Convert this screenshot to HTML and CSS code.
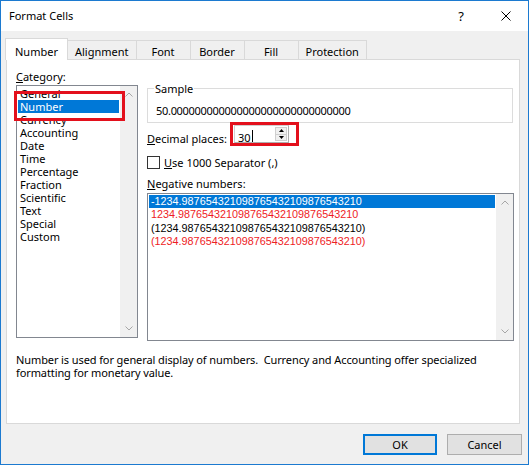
FILE: index.html
```html
<!DOCTYPE html>
<html>
<head>
<meta charset="utf-8">
<link rel="stylesheet" href="styles.css">
</head>
<body>
<div class="window">
  <div class="titlebar">
    <span class="title">Format Cells</span>
    <span class="tbtn help">?</span>
    <span class="tbtn close">
      <svg width="10" height="10" viewBox="0 0 10 10"><path d="M0.5 0.5 L9.5 9.5 M9.5 0.5 L0.5 9.5" stroke="#000" stroke-width="1" fill="none"/></svg>
    </span>
  </div>
  <div class="tabs">
    <div class="tab active">Number</div>
    <div class="tab">Alignment</div>
    <div class="tab">Font</div>
    <div class="tab">Border</div>
    <div class="tab">Fill</div>
    <div class="tab">Protection</div>
  </div>
  <div class="panel">
    <div class="main">
      <div class="left">
        <div class="label"><u>C</u>ategory:</div>
        <div class="listbox cat">
          <ul class="items">
            <li>General</li>
            <li class="sel">Number</li>
            <li>Currency</li>
            <li>Accounting</li>
            <li>Date</li>
            <li>Time</li>
            <li>Percentage</li>
            <li>Fraction</li>
            <li>Scientific</li>
            <li>Text</li>
            <li>Special</li>
            <li>Custom</li>
          </ul>
          <div class="scrollbar">
            <span class="sbtn"><svg width="8" height="5" viewBox="0 0 8 5"><path d="M0.5 4.5 L4 1 L7.5 4.5" stroke="#a6a6a6" fill="none"/></svg></span>
            <span class="sbtn"><svg width="8" height="5" viewBox="0 0 8 5"><path d="M0.5 0.5 L4 4 L7.5 0.5" stroke="#a6a6a6" fill="none"/></svg></span>
          </div>
        </div>
        <div class="annot annot-cat"></div>
      </div>
      <div class="right">
        <fieldset class="sample">
          <legend>Sample</legend>
          <div class="sample-value">50.000000000000000000000000000000</div>
        </fieldset>
        <div class="decimal-row">
          <span class="dec-label"><u>D</u>ecimal places:</span>
          <span class="spin-annot">
            <span class="spin">
              <span class="spin-val">30</span><span class="caret"></span>
              <span class="spin-btns">
                <span class="sp-up"><svg width="5" height="3" viewBox="0 0 5 3"><path d="M0 3 L2.5 0 L5 3 Z" fill="#000"/></svg></span>
                <span class="sp-down"><svg width="5" height="3" viewBox="0 0 5 3"><path d="M0 0 L2.5 3 L5 0 Z" fill="#000"/></svg></span>
              </span>
            </span>
          </span>
        </div>
        <div class="check-row">
          <span class="checkbox"></span>
          <span><u>U</u>se 1000 Separator (,)</span>
        </div>
        <div class="label neg-label"><u>N</u>egative numbers:</div>
        <div class="listbox neg">
          <ul class="items neg-items">
            <li class="sel">-1234.987654321098765432109876543210</li>
            <li class="red">1234.987654321098765432109876543210</li>
            <li>(1234.987654321098765432109876543210)</li>
            <li class="red">(1234.987654321098765432109876543210)</li>
          </ul>
          <div class="scrollbar">
            <span class="sbtn"><svg width="8" height="5" viewBox="0 0 8 5"><path d="M0.5 4.5 L4 1 L7.5 4.5" stroke="#a6a6a6" fill="none"/></svg></span>
            <span class="sbtn"><svg width="8" height="5" viewBox="0 0 8 5"><path d="M0.5 0.5 L4 4 L7.5 0.5" stroke="#a6a6a6" fill="none"/></svg></span>
          </div>
        </div>
      </div>
    </div>
    <p class="desc">Number is used for general display of numbers.&nbsp; Currency and Accounting offer specialized<br>formatting for monetary value.</p>
  </div>
  <div class="footer">
    <button class="btn default">OK</button>
    <button class="btn cancel">Cancel</button>
  </div>
</div>
</body>
</html>
```

FILE: styles.css
```css
* { box-sizing: border-box; }
body { margin: 0; }
.window {
  width: 529px;
  height: 465px;
  border: 1px solid #1c7ad0;
  background: #f0f0f0;
  font-family: "Noto Sans", sans-serif;
  font-size: 11px;
  line-height: 13px;
  color: #000;
  overflow: hidden;
}
.titlebar {
  height: 30px;
  background: #fff;
  display: flex;
  align-items: flex-start;
}
.title { flex: 1; padding: 8px 0 0 8px; font-size: 11px; }
.tbtn {
  height: 30px;
  display: flex;
  align-items: center;
  justify-content: center;
}
.help { width: 46px; font-size: 13px; }
.close { width: 44px; }

.tabs {
  display: flex;
  align-items: flex-end;
  height: 21px;
  margin: 7px 0 0 4px;
  position: relative;
  z-index: 1;
}
.tab {
  height: 19px;
  padding: 4px 7px 0;
  min-width: 55px;
  text-align: center;
  border: 1px solid #d9d9d9;
  border-bottom: 0;
  background: #f0f0f0;
  margin-left: -1px;
  white-space: nowrap;
}
.tab.active {
  height: 22px;
  padding: 6px 9px 0;
  margin-left: 0;
  margin-bottom: -1px;
  background: #fff;
  position: relative;
  z-index: 2;
}

.panel {
  height: 365px;
  margin: 0 8px 0 5px;
  border: 1px solid #d9d9d9;
  background: #fff;
  padding: 10px 0 0 9px;
  display: flex;
  flex-direction: column;
}
.main { display: flex; gap: 9px; }
.left { width: 122px; position: relative; }
.right { width: 367px; }
.label { line-height: 13px; }

.listbox {
  border: 1px solid #828790;
  display: flex;
  background: #fff;
}
.cat { margin-top: 2px; height: 253px; }
.items {
  flex: 1;
  list-style: none;
  margin: 0;
  padding: 1px 0 0;
}
.items li {
  margin: 0 1px;
  padding-left: 2px;
  height: 13px;
  line-height: 13px;
  white-space: nowrap;
}
.items li.sel { background: #0078d7; color: #fff; }
.scrollbar {
  width: 17px;
  background: #f0f0f0;
  display: flex;
  flex-direction: column;
  justify-content: space-between;
}
.sbtn {
  height: 17px;
  display: flex;
  align-items: center;
  justify-content: center;
}

.annot {
  position: absolute;
  border: 3px solid #e3101c;
  pointer-events: none;
}
.annot-cat { left: -2px; top: 21px; width: 111px; height: 30px; }

.sample {
  width: 366px;
  margin: 12px 0 0;
  padding: 9px 0 5px 8px;
  border: 1px solid #dcdcdc;
  min-width: 0;
}
.sample legend {
  padding: 0 1px;
  margin-left: -2px;
  line-height: 13px;
}
.sample-value { line-height: 13px; letter-spacing: -0.3px; }

.decimal-row {
  display: flex;
  align-items: flex-start;
  margin-top: -1px;
  height: 24px;
}
.dec-label { width: 83px; padding-top: 10px; }
.spin-annot {
  width: 69px;
  height: 24px;
  border: 3px solid #e3101c;
  padding-left: 1px;
  display: flex;
}
.spin {
  width: 55px;
  height: 18px;
  border: 1px solid #aeaeae;
  border-top-color: #d0d0d0;
  border-left-color: #d0d0d0;
  background: #fff;
  display: flex;
}
.spin-val { padding: 5px 0 0 3px; line-height: 13px; }
.caret { width: 1px; height: 12px; background: #000; margin: 4px 0 0 1px; }
.spin-btns {
  margin-left: auto;
  width: 13px;
  display: flex;
  flex-direction: column;
  padding: 1px 1px 1px 0;
}
.spin-btns span {
  flex: 1;
  display: flex;
  align-items: center;
  justify-content: center;
  background: #f0f0f0;
  border: 1px solid #cfcfcf;
}
.spin-btns .sp-down { border-top: 0; }

.check-row {
  margin-top: 10px;
  display: flex;
  align-items: center;
  height: 13px;
}
.checkbox {
  width: 13px;
  height: 13px;
  border: 1px solid #333;
  background: #fff;
  margin-right: 4px;
}
.neg-label { margin-top: 8px; }
.neg { margin-top: 3px; height: 148px; width: 367px; }
.neg-items {
  font-family: "Liberation Sans", Arial, sans-serif;
  font-size: 10.8px;
}
.neg-items li { height: 13.33px; line-height: 13.33px; }
.neg-items li.red { color: #ee1c25; }

.desc { margin: 12px 0 0; line-height: 13px; letter-spacing: -0.1px; }

.footer {
  display: flex;
  justify-content: flex-end;
  gap: 10px;
  padding: 10px 6px 0 0;
}
.btn {
  width: 74px;
  height: 21px;
  border: 1px solid #adadad;
  background: #e1e1e1;
  font-family: inherit;
  font-size: 11px;
  line-height: 13px;
  padding: 0;
  color: #000;
}
.btn.cancel { width: 75px; }
.btn.default {
  border-color: #0078d7;
  box-shadow: inset 0 0 0 1px #0078d7;
}
```
